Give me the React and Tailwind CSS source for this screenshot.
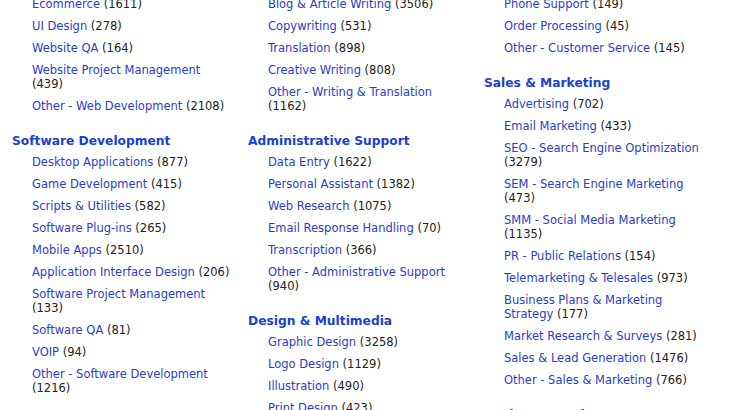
import React from "react";

const columns = [
  [
    {
      title: null,
      items: [
        ["Ecommerce", "1611"],
        ["UI Design", "278"],
        ["Website QA", "164"],
        ["Website Project Management", "439"],
        ["Other - Web Development", "2108"],
      ],
    },
    {
      title: "Software Development",
      items: [
        ["Desktop Applications", "877"],
        ["Game Development", "415"],
        ["Scripts & Utilities", "582"],
        ["Software Plug-ins", "265"],
        ["Mobile Apps", "2510"],
        ["Application Interface Design", "206"],
        ["Software Project Management", "133"],
        ["Software QA", "81"],
        ["VOIP", "94"],
        ["Other - Software Development", "1216"],
      ],
    },
  ],
  [
    {
      title: null,
      items: [
        ["Blog & Article Writing", "3506"],
        ["Copywriting", "531"],
        ["Translation", "898"],
        ["Creative Writing", "808"],
        ["Other - Writing & Translation", "1162"],
      ],
    },
    {
      title: "Administrative Support",
      items: [
        ["Data Entry", "1622"],
        ["Personal Assistant", "1382"],
        ["Web Research", "1075"],
        ["Email Response Handling", "70"],
        ["Transcription", "366"],
        ["Other - Administrative Support", "940"],
      ],
    },
    {
      title: "Design & Multimedia",
      items: [
        ["Graphic Design", "3258"],
        ["Logo Design", "1129"],
        ["Illustration", "490"],
        ["Print Design", "423"],
        ["Web Design", "1500"],
      ],
    },
  ],
  [
    {
      title: null,
      items: [
        ["Phone Support", "149"],
        ["Order Processing", "45"],
        ["Other - Customer Service", "145"],
      ],
    },
    {
      title: "Sales & Marketing",
      items: [
        ["Advertising", "702"],
        ["Email Marketing", "433"],
        ["SEO - Search Engine Optimization", "3279"],
        ["SEM - Search Engine Marketing", "473"],
        ["SMM - Social Media Marketing", "1135"],
        ["PR - Public Relations", "154"],
        ["Telemarketing & Telesales", "973"],
        ["Business Plans & Marketing Strategy", "177"],
        ["Market Research & Surveys", "281"],
        ["Sales & Lead Generation", "1476"],
        ["Other - Sales & Marketing", "766"],
      ],
    },
    {
      title: "Business Services",
      items: [["Accounting", "500"]],
    },
  ],
];

function Section({ section }) {
  return (
    <div>
      {section.title && (
        <h3 className="mt-[12px] mb-[6px] text-[12.25px] leading-[16px] font-bold text-[#1b3fd3]">
          {section.title}
        </h3>
      )}
      <ul className="ml-[20px] w-[199px]">
        {section.items.map(([name, count]) => (
          <li key={name} className="mb-[8px] text-[11.5px] leading-[14px]">
            <a href="#" className="text-[#2a3dc9] no-underline">
              {name}
            </a>{" "}
            <span className="text-[#222222]">({count})</span>
          </li>
        ))}
      </ul>
    </div>
  );
}

export default function App() {
  return (
    <div
      className="h-[410px] w-[731px] overflow-hidden bg-white"
      style={{ fontFamily: '"DejaVu Sans", Verdana, sans-serif' }}
    >
      <div className="-mt-[3px] grid grid-cols-[236px_236px_236px] pl-[12px]">
        {columns.map((col, i) => (
          <div key={i} className="flex flex-col">
            {col.map((s, j) => (
              <Section key={j} section={s} />
            ))}
          </div>
        ))}
      </div>
    </div>
  );
}
